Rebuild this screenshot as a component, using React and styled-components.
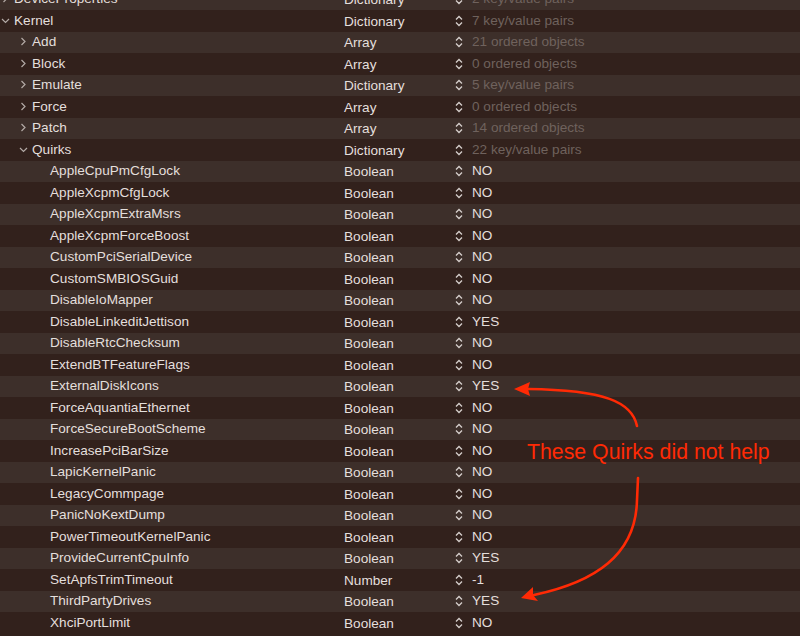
import React from 'react'
import styled, { createGlobalStyle } from 'styled-components'

const GlobalStyle = createGlobalStyle`
  html, body { margin: 0; padding: 0; background: #32211c; overflow: hidden; }
  body { font-family: "Liberation Sans", Arial, sans-serif; }
`

const ROW_H = 21.5

const Page = styled.div`
  position: relative;
  width: 800px;
  height: 636px;
  overflow: hidden;
  background: #32211c;
`

const List = styled.div`
  display: flex;
  flex-direction: column;
  margin-top: -${ROW_H - 10}px;
`

const Row = styled.div`
  display: grid;
  grid-template-columns: 344px 111px 17px 1fr;
  align-items: center;
  height: ${ROW_H}px;
  background: ${p => (p.$alt ? '#3d2f2a' : '#32211c')};
  font-size: 13.6px;
  color: #e4dfdc;
`

const KeyCell = styled.div`
  display: flex;
  align-items: center;
  padding-left: ${p => p.$indent}px;
  white-space: nowrap;
  margin-top: -1px;
`

const Disclosure = styled.span`
  display: inline-flex;
  width: 13px;
  justify-content: flex-start;
  color: #b3aaa6;
`

const TypeCell = styled.div`
  white-space: nowrap;
  margin-top: 1px;
`

const Stepper = styled.div`
  display: flex;
  align-items: center;
  color: #d6cfcc;
`

const ValueCell = styled.div`
  white-space: nowrap;
  margin-top: -1px;
  color: ${p => (p.$dim ? '#6f625d' : '#e4dfdc')};
`

const Note = styled.div`
  position: absolute;
  left: 527px;
  top: 442px;
  font-size: 21.3px;
  line-height: 21px;
  color: #ff2a05;
  white-space: nowrap;
`

const Overlay = styled.svg`
  position: absolute;
  left: 0;
  top: 0;
  pointer-events: none;
`

const Chevron = ({ open }) => (
  <svg width="9" height="9" viewBox="0 0 9 9">
    {open ? (
      <path d="M1 3 L4.5 6.5 L8 3" fill="none" stroke="currentColor" strokeWidth="1.2" />
    ) : (
      <path d="M2.5 1 L6 4.5 L2.5 8" fill="none" stroke="currentColor" strokeWidth="1.2" />
    )}
  </svg>
)

const UpDown = () => (
  <svg width="8" height="12" viewBox="0 0 8 12">
    <path d="M1 4.5 L4 1.5 L7 4.5 M1 7.5 L4 10.5 L7 7.5" fill="none" stroke="currentColor" strokeWidth="1.3" />
  </svg>
)

const rows = [
  { key: 'DeviceProperties', type: 'Dictionary', value: '2 key/value pairs', dim: true, level: 0, chev: 'closed' },
  { key: 'Kernel', type: 'Dictionary', value: '7 key/value pairs', dim: true, level: 0, chev: 'open' },
  { key: 'Add', type: 'Array', value: '21 ordered objects', dim: true, level: 1, chev: 'closed' },
  { key: 'Block', type: 'Array', value: '0 ordered objects', dim: true, level: 1, chev: 'closed' },
  { key: 'Emulate', type: 'Dictionary', value: '5 key/value pairs', dim: true, level: 1, chev: 'closed' },
  { key: 'Force', type: 'Array', value: '0 ordered objects', dim: true, level: 1, chev: 'closed' },
  { key: 'Patch', type: 'Array', value: '14 ordered objects', dim: true, level: 1, chev: 'closed' },
  { key: 'Quirks', type: 'Dictionary', value: '22 key/value pairs', dim: true, level: 1, chev: 'open' },
  ...[
    ['AppleCpuPmCfgLock', 'NO'],
    ['AppleXcpmCfgLock', 'NO'],
    ['AppleXcpmExtraMsrs', 'NO'],
    ['AppleXcpmForceBoost', 'NO'],
    ['CustomPciSerialDevice', 'NO'],
    ['CustomSMBIOSGuid', 'NO'],
    ['DisableIoMapper', 'NO'],
    ['DisableLinkeditJettison', 'YES'],
    ['DisableRtcChecksum', 'NO'],
    ['ExtendBTFeatureFlags', 'NO'],
    ['ExternalDiskIcons', 'YES'],
    ['ForceAquantiaEthernet', 'NO'],
    ['ForceSecureBootScheme', 'NO'],
    ['IncreasePciBarSize', 'NO'],
    ['LapicKernelPanic', 'NO'],
    ['LegacyCommpage', 'NO'],
    ['PanicNoKextDump', 'NO'],
    ['PowerTimeoutKernelPanic', 'NO'],
    ['ProvideCurrentCpuInfo', 'YES'],
    ['SetApfsTrimTimeout', '-1', 'Number'],
    ['ThirdPartyDrives', 'YES'],
    ['XhciPortLimit', 'NO'],
  ].map(([key, value, type]) => ({ key, value, type: type || 'Boolean', level: 2 })),
]

const indentFor = level => [1, 19, 50][level]

export default function App() {
  return (
    <Page>
      <GlobalStyle />
      <List>
        {rows.map((r, i) => (
          <Row key={r.key} $alt={i % 2 === 0}>
            <KeyCell $indent={indentFor(r.level)}>
              {r.chev && (
                <Disclosure>
                  <Chevron open={r.chev === 'open'} />
                </Disclosure>
              )}
              {r.key}
            </KeyCell>
            <TypeCell>{r.type}</TypeCell>
            <Stepper>
              <UpDown />
            </Stepper>
            <ValueCell $dim={r.dim}>{r.value}</ValueCell>
          </Row>
        ))}
      </List>
      <Note>These Quirks did not help</Note>
      <Overlay width="800" height="636" viewBox="0 0 800 636">
        <g fill="none" stroke="#ff2a05" strokeWidth="2.6" strokeLinecap="round">
          <path d="M637 426 C 632 402, 605 390, 528 389" />
          <path d="M638 478 L637 500 C 636 555, 595 582, 534 595" />
        </g>
        <g fill="#ff2a05">
          <path d="M514 389 L530 382 L528 389 L530 396 Z" />
          <path d="M521 598 L533 587 L533 595 L538 601 Z" />
        </g>
      </Overlay>
    </Page>
  )
}
